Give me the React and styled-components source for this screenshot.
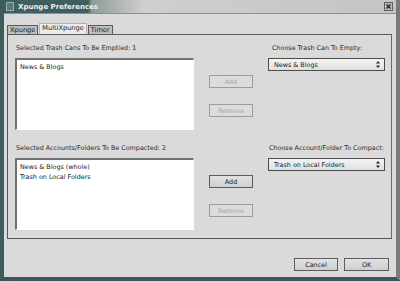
import React from 'react';
import styled, { createGlobalStyle } from 'styled-components';

const Global = createGlobalStyle`
  html, body { margin: 0; padding: 0; background: #4a6666; }
  body { font-family: "DejaVu Sans", "Liberation Sans", sans-serif; }
`;

const Frame = styled.div`
  width: 400px;
  height: 281px;
  box-sizing: border-box;
  display: flex;
  flex-direction: column;
  border-left: 4px solid #3d5c5c;
  border-right: 4px solid #7a7a7a;
  border-bottom: 4px solid #3d5656;
  background: #dadada;
  overflow: hidden;
`;

const TitleBar = styled.div`
  height: 14px;
  display: flex;
  align-items: center;
  background: linear-gradient(to right, #3f5f5f 0, #3f5f5f 84px, #8c9c9a 88px, #cfcfcf 140px, #c4c4c4 100%);
  border-bottom: 1px solid #8f8f8f;
  box-sizing: border-box;
  padding: 0 3px 0 2px;
  gap: 4px;
`;

const TitleIcon = styled.div`
  width: 6px;
  height: 7px;
  border: 1px solid #9ab0b0;
  background: #5c7878;
`;

const TitleText = styled.span`
  color: #f0f0f0;
  font-size: 7px;
  font-weight: bold;
  flex: 1;
`;

const CloseBox = styled.div`
  width: 7px;
  height: 7px;
  border: 1px solid #606060;
  background: #b8b8b8;
  display: flex;
  align-items: center;
  justify-content: center;
`;

const Body = styled.div`
  flex: 1;
  display: flex;
  flex-direction: column;
  padding: 9px 4px 0 3px;
`;

const Tabs = styled.div`
  display: flex;
  align-items: flex-end;
  height: 11px;
`;

const Tab = styled.div`
  height: ${p => (p.$active ? '11px' : '9px')};
  box-sizing: border-box;
  padding: 0 2px;
  font-size: 6.6px;
  line-height: ${p => (p.$active ? '9px' : '8px')};
  color: #202020;
  background: ${p => (p.$active ? '#ececec' : '#bdbdbd')};
  border: 1px solid ${p => (p.$active ? '#b0b0b0' : '#5a5a5a')};
  border-bottom: none;
  margin-right: 1px;
`;

const Panel = styled.div`
  height: 205px;
  box-sizing: border-box;
  border: 1px solid #555;
  border-top-color: #5a5a5a;
  border-right-color: #6a6a6a;
  background: #dadada;
  padding: 9px 6px 0 7px;
  display: flex;
  flex-direction: column;
  gap: 14px;
`;

const Section = styled.div`
  display: grid;
  grid-template-columns: 179px 1fr 117px;
  grid-template-rows: 14px 72px;
`;

const Label = styled.div`
  font-size: 6.4px;
  color: #2a2a2a;
  line-height: 8px;
  white-space: nowrap;
  padding-left: ${p => p.$indent || 1}px;
`;

const ListBox = styled.div`
  grid-column: 1;
  grid-row: 2;
  background: #fff;
  border: 1px solid #fff;
  border-top: 2px solid #707070;
  border-left: 2px solid #707070;
  padding: 2px 3px;
  font-size: 6.4px;
  line-height: 10px;
  color: #202020;
`;

const Middle = styled.div`
  grid-column: 2;
  grid-row: 1 / span 2;
  display: flex;
  flex-direction: column;
  align-items: center;
  padding-top: ${p => p.$top}px;
  gap: 16px;
`;

const Button = styled.div`
  width: ${p => p.$w || 44}px;
  height: 13px;
  box-sizing: border-box;
  border: 1px solid ${p => (p.$disabled ? '#9c9c9c' : '#5c5c5c')};
  background: ${p => (p.$disabled ? '#dcdcdc' : 'linear-gradient(#e2e2e2, #cfcfcf)')};
  color: ${p => (p.$disabled ? '#a4a4a4' : '#202020')};
  font-size: 6.4px;
  display: flex;
  align-items: center;
  justify-content: center;
`;

const Right = styled.div`
  grid-column: 3;
  grid-row: 1 / span 2;
  display: flex;
  flex-direction: column;
  gap: 6px;
`;

const Select = styled.div`
  height: 13px;
  box-sizing: border-box;
  border: 1px solid #4c4c4c;
  background: linear-gradient(#f4f4f4, #e0e0e0);
  display: flex;
  align-items: center;
  justify-content: space-between;
  padding: 0 4px 0 5px;
  font-size: 6.4px;
  color: #202020;
`;

const Footer = styled.div`
  flex: 1;
  display: flex;
  justify-content: flex-end;
  align-items: flex-start;
  padding: 19px 3px 0 0;
  gap: 6px;
`;

const Arrows = () => (
  <svg width="4" height="7" viewBox="0 0 4 7">
    <path d="M2 0 L4 2.5 L0 2.5 Z M2 7 L4 4.5 L0 4.5 Z" fill="#202020" />
  </svg>
);

export default function App() {
  return (
    <>
      <Global />
      <Frame>
        <TitleBar>
          <TitleIcon />
          <TitleText>Xpunge Preferences</TitleText>
          <CloseBox>
            <svg width="5" height="5" viewBox="0 0 5 5">
              <path d="M0.5 0.5 L4.5 4.5 M4.5 0.5 L0.5 4.5" stroke="#202020" strokeWidth="1.2" />
            </svg>
          </CloseBox>
        </TitleBar>
        <Body>
          <Tabs>
            <Tab>Xpunge</Tab>
            <Tab $active>MultiXpunge</Tab>
            <Tab>Timer</Tab>
          </Tabs>
          <Panel>
            <Section>
              <Label>Selected Trash Cans To Be Emptied: 1</Label>
              <ListBox>News &amp; Blogs</ListBox>
              <Middle $top={31}>
                <Button $disabled>Add</Button>
                <Button $disabled>Remove</Button>
              </Middle>
              <Right>
                <Label $indent={4}>Choose Trash Can To Empty:</Label>
                <Select>News &amp; Blogs<Arrows /></Select>
              </Right>
            </Section>
            <Section>
              <Label>Selected Accounts/Folders To Be Compacted: 2</Label>
              <ListBox>
                News &amp; Blogs (whole)
                <br />
                Trash on Local Folders
              </ListBox>
              <Middle $top={31}>
                <Button>Add</Button>
                <Button $disabled>Remove</Button>
              </Middle>
              <Right>
                <Label $indent={1}>Choose Account/Folder To Compact:</Label>
                <Select>Trash on Local Folders<Arrows /></Select>
              </Right>
            </Section>
          </Panel>
          <Footer>
            <Button $w={44}>Cancel</Button>
            <Button $w={45}>OK</Button>
          </Footer>
        </Body>
      </Frame>
    </>
  );
}
